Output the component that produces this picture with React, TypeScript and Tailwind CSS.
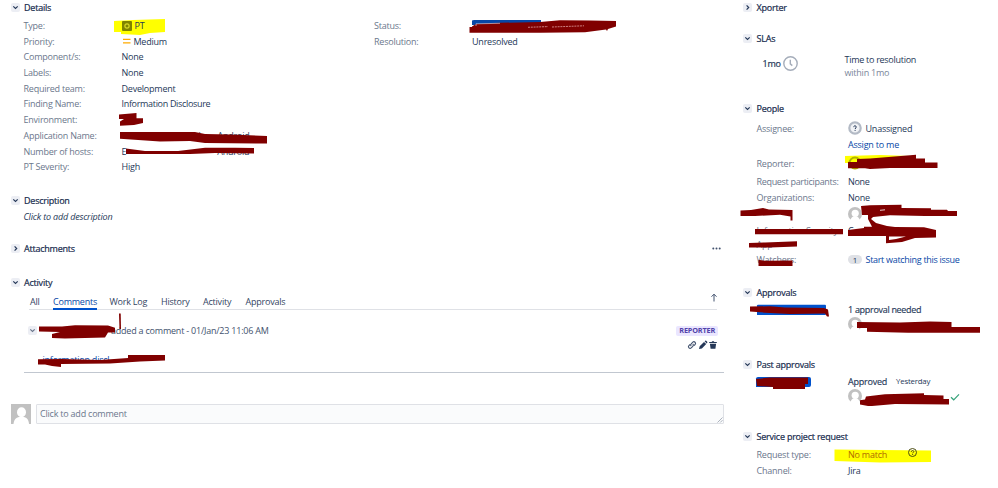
import type { ReactNode } from 'react';

/* Small square disclosure button with a chevron. */
function Toggle({ open = true, muted = false }: { open?: boolean; muted?: boolean }) {
  return (
    <span className="flex size-[9px] shrink-0 items-center justify-center rounded-[2px] bg-[#eceef4]">
      <svg viewBox="0 0 9 9" className="size-[9px]" fill="none" stroke={muted ? '#6b778c' : '#253858'} strokeWidth="1.2">
        <path d={open ? 'M2.3 3.4 4.5 5.4 6.7 3.4' : 'M3.6 2.3 5.7 4.5 3.6 6.7'} />
      </svg>
    </span>
  );
}

function Heading({ children, open = true, className = '' }: { children: ReactNode; open?: boolean; className?: string }) {
  return (
    <h2 className={`flex h-4 items-center gap-[4.5px] text-[#172b4d] ${className}`}>
      <Toggle open={open} />
      <span className="[-webkit-text-stroke:0.2px_#172b4d]">{children}</span>
    </h2>
  );
}

function Field({ label, children, className = 'h-[15.7px]' }: { label: string; children?: ReactNode; className?: string }) {
  return (
    <div className={`flex items-center ${className}`}>
      <dt className="w-[98px] shrink-0 text-[#6b778c]">{label}</dt>
      <dd className="flex items-center">{children}</dd>
    </div>
  );
}

function SideField({ label, children, className = '' }: { label: string; children?: ReactNode; className?: string }) {
  return (
    <div className={`flex items-center pl-[13.5px] ${className}`}>
      <dt className="w-[91.5px] shrink-0 whitespace-nowrap text-[#6b778c]">{label}</dt>
      <dd className="flex items-center">{children}</dd>
    </div>
  );
}

function Avatar() {
  return (
    <svg viewBox="0 0 14 14" className="size-[14px]">
      <circle cx="7" cy="7" r="7" fill="#c1c1c1" />
      <circle cx="7.2" cy="6.3" r="3.6" fill="#fff" />
      <path d="M2.4 14c.2-3.2 1.8-4.8 4.7-4.8s4.5 1.6 4.7 4.8z" fill="#fff" />
    </svg>
  );
}

function Highlights() {
  return (
    <svg className="absolute left-0 top-0 h-[488px] w-[998px]" viewBox="0 0 998 488" fill="#ffff00">
      <path d="M114 21 133 20 165 19V32L150 33 140 35 121 34V32H114z" />
      <path d="M845 156 880 155 910 156V166H848V163H845z" />
      <path d="M834.5 449.5 880 450 931 450.5V462L880 462.5 834.5 461z" />
    </svg>
  );
}

function Redactions() {
  return (
    <svg className="pointer-events-none absolute left-0 top-0 h-[488px] w-[998px]" viewBox="0 0 998 488" fill="#800000">
      <path d="M472 20.5 474 20H541V25H472z" fill="#0747a6" />
      <path d="M757 305.5Q757 304.7 758 304.7H825Q826 304.7 826 306V314Q826 315 825 315H757z" fill="#0052cc" />
      <path d="M756 378.5Q756 377 758 377H809Q811 377 811 379V385Q811 387 809 387H756z" fill="#0052cc" />

      <path d="M469.5 27H472V26.5L476 24 500 22.8 540 22 560 20.2 590 20.5 616 21V26.5L608 29 607 31 606 29.5 585 32.3 540 32.7H469.5z" />
      <path d="M476 26V23.8L500 23.3" fill="none" stroke="#dbe5f5" strokeWidth="0.6" />
      <path d="M528 27.3 548 26.6M552 27 584 25.8" stroke="#e0a0a0" strokeWidth="0.8" strokeDasharray="2 .8" />

      <path d="M119 114.5 136.5 113V118.3H143V123L134 125 120 125.7V121.5L124 119H119z" />
      <path d="M120 132H195L205 134 230 134.5 267 136V143.5L205 143 190 141 160 141.5 120 138.7z" />
      <path d="M126 148.5 145 151H178L205 147.7 235 147.7 254 148V153.5L215 153 190 154 126 154z" />

      <path d="M39 326.5 62 326.5 75 325.3 108 325.5 115 327.8V332.5H108L105 337.5 65 338.5 52 338V334L60 332 39 331.5z" />
      <path d="M119 313.5H120.7L121 329H119.5z" />
      <path d="M38 359.2 62 359 100 360 128 358V355H165V360.5L140 361.5 110 363.5 61 364V367L52 366 45 364.5H38z" />

      <path d="M848 162H857V159L870 158.5 910 155.3 916 154.7V158.5H925V162.5H937.5V168H890L870 169 865 168.2H848z" />
      <path d="M740.5 210.5 751 210 763 208 769 209.5 792.5 210V220.5H790.5V216.5L780 214.7 755 216H740.5z" />
      <path d="M861 206 870 205.3 901.5 204.7V208L931 208.3V209.8L947 209.7 948 211H957V216H925L890 215.3 873 217 871 219 876 223 887 226 895 227 924 227.3 936 230V237.5L915 238 902 242 886 243.3 886 236 848 236V230L864 228V226.8H872L868 219V215H862z" />
      <path d="M889 236.6 906 236.6 896 239 889 240z" fill="#fff" />
      <path d="M880 210.3 885 209.8" stroke="#fff" strokeWidth="0.8" />
      <path d="M755 229H843V234.3H755z" />
      <path d="M749 243 765 242.4 797 241.3V246.5L770 247.5H749z" />
      <path d="M758.5 259.7 765 260.8 792.5 260.5V266H758.5z" />

      <path d="M750 306.5 770 306.3 785 307.5 824 308 828 309.5 829 316.5H827L825 313.5 790 314 765 312.7 750 311.5z" />
      <path d="M857 322 900 322.5 930 321.5 951.5 322V327H980V332.7H908L867 331.7V328H857z" />
      <path d="M756 379 770 377.5 808 377.5V384H805V389H773V387L757 386z" />
      <path d="M860 400.3 865 399.5 866 396.5 885 394.3 924 393.3V395L943.5 395.5V399H949V404.5L895 404 872 406H868L860 404.5z" />
    </svg>
  );
}

export default function App() {
  return (
    <div className="relative h-[488px] w-[998px] overflow-hidden bg-white font-['Open_Sans','Noto_Sans',sans-serif] text-[9px] leading-none tracking-[-0.22px] text-[#253858]">
      <Highlights />
      <div className="relative flex">
        <main className="-mt-[0.6px] w-[733px] shrink-0 pl-[10.5px]">
          <Heading>Details</Heading>
          <div className="mt-[2.3px] flex pl-[13px]">
            <dl className="w-[350.5px]">
              <Field label="Type:">
                <svg viewBox="0 0 10 10" className="mr-[3px] size-[10px]">
                  <rect width="10" height="10" rx="1" fill="#7f8400" />
                  <rect x="3" y="3" width="4" height="4" rx="1" fill="none" stroke="#f2f230" />
                </svg>
                PT
              </Field>
              <Field label="Priority:">
                <svg viewBox="0 0 10 10" className="mr-[2px] size-[10px]" stroke="#ffab00" strokeWidth="1.3">
                  <path d="M1 3.4h7.5M1 6.9h7.5" />
                </svg>
                Medium
              </Field>
              <Field label="Component/s:">None</Field>
              <Field label="Labels:">None</Field>
              <Field label="Required team:">Development</Field>
              <Field label="Finding Name:"><span className="tracking-[-0.32px]">Information Disclosure</span></Field>
              <Field label="Environment:" />
              <Field label="Application Name:">
                <span className="ml-[77px]">l</span>
                <span className="ml-[17px]">Android</span>
              </Field>
              <Field label="Number of hosts:">
                <span>E</span>
                <span className="ml-[91px]">Android</span>
              </Field>
              <Field label="PT Severity:">High</Field>
            </dl>
            <dl>
              <Field label="Status:" />
              <Field label="Resolution:">Unresolved</Field>
            </dl>
          </div>

          <Heading className="mt-[17.7px]">Description</Heading>
          <p className="flex h-4 items-center pl-[13px] italic tracking-[-0.17px]">Click to add description</p>

          <div className="mt-[16.5px] flex items-center justify-between pr-[12px]">
            <Heading open={false}>Attachments</Heading>
            <svg viewBox="0 0 9 3" className="h-[3px] w-[9px]" fill="#42526e">
              <circle cx="1.3" cy="1.5" r="1" />
              <circle cx="4.5" cy="1.5" r="1" />
              <circle cx="7.7" cy="1.5" r="1" />
            </svg>
          </div>

          <Heading className="mt-[17.5px]">Activity</Heading>
          <section className="ml-[13px] mr-[9px] h-[83px] border-b border-[#c1c7d0]">
            <nav className="ml-[5px] mr-[7px] flex h-[19.5px] items-stretch border-b border-[#dfe1e6] text-[#344563]">
              <span className="flex w-[24.5px] items-center pl-[1.5px] pt-[3px]">All</span>
              <span className="-mb-px mr-[13px] flex w-[43.5px] items-center border-b-2 border-[#0052cc] pt-[4px] text-[#0747a6]">Comments</span>
              <span className="flex w-[51.5px] items-center pt-[3px]">Work Log</span>
              <span className="flex w-[42px] items-center pt-[3px]">History</span>
              <span className="flex w-[42.5px] items-center pt-[3px]">Activity</span>
              <span className="flex items-center pt-[3px]">Approvals</span>
              <svg viewBox="0 0 8 9" className="-mr-[1px] ml-auto mt-[3px] h-[9px] w-[8px]" fill="none" stroke="#42526e">
                <path d="M4 8.5V1.2M1.5 3.7 4 1.2l2.5 2.5" />
              </svg>
            </nav>
            <div className="mt-[13px] flex h-4 items-center pl-[4px] pr-[6px]">
              <Toggle muted />
              <span className="ml-[74.5px] text-[#42526e]">added a comment - 01/Jan/23 11:06 AM</span>
              <span className="ml-auto flex h-[10px] items-center rounded-[2px] bg-[#eae6ff] px-[3px] text-[7.3px] font-bold tracking-[-0.2px] text-[#5243aa]">REPORTER</span>
            </div>
            <div className="flex h-[13px] items-center justify-end pr-[6px]">
              <svg viewBox="0 0 10 10" className="mr-px size-[10px]" fill="none" stroke="#42526e" strokeWidth="1.1">
                <path d="M4.2 6.2C3.4 5.4 3.5 4.5 4.2 3.8L5.8 2.2C7.3 .8 9.5 3 8.1 4.5L6.9 5.6M5.8 3.9c.8.8.7 1.7 0 2.4L4.2 7.9C2.7 9.3.5 7.1 1.9 5.6L3.1 4.5" />
              </svg>
              <svg viewBox="0 0 10 10" className="size-[10px]" fill="#253858">
                <path d="M1 9.1 1.7 6.2 6 1.9 8.2 4.1 3.9 8.4zM6.6 1.3 7.3.7Q7.8.4 8.2.8L9.2 1.8Q9.6 2.3 9.2 2.8L8.7 3.5z" />
              </svg>
              <svg viewBox="0 0 10 10" className="size-[10px]" fill="#253858">
                <path d="M1.2 2.1H3.7L4.1 1.2H5.9L6.3 2.1H8.8V3H1.2zM1.9 3.7H8.1L7.4 8.8H2.6z" />
              </svg>
            </div>
            <p className="flex h-4 items-center pl-[19px] text-[#0747a6]">information discl</p>
          </section>

          <div className="mt-[31px] flex h-[20px] items-start">
            <svg viewBox="0 0 20 20" className="size-[20px]">
              <rect width="20" height="20" fill="#c1c1c1" />
              <ellipse cx="10.5" cy="8.3" rx="4.5" ry="5" fill="#fff" />
              <path d="M2.5 20c.5-4.8 3-7.2 8-7.2s7 2.4 7.5 7.2z" fill="#fff" />
            </svg>
            <div className="relative ml-[5.5px] flex h-[20px] w-[688px] items-center rounded-[1px] border border-[#dfe1e6] bg-[#fafbfc] pb-px pl-[3px] text-[#6b778c]">
              Click to add comment
              <svg viewBox="0 0 6 6" className="absolute bottom-0 right-0 size-[6px]" stroke="#8993a4" strokeWidth="0.7">
                <path d="M.5 5.5l5-5M3.2 5.5l2.3-2.3" />
              </svg>
            </div>
          </div>
        </main>

        <aside className="-mt-[0.6px] flex-1 pl-[10px]">
          <Heading open={false}>Xporter</Heading>
          <Heading className="mt-[15.5px]">SLAs</Heading>
          <div className="mt-[3.5px] flex h-[26px] items-center pl-[19.5px]">
            <span className="w-[20px] [-webkit-text-stroke:0.2px_#253858]">1mo</span>
            <svg viewBox="0 0 15 15" className="size-[15px]" fill="none" stroke="#a5adba" strokeWidth="1.4">
              <circle cx="7.5" cy="7.5" r="6.7" />
              <path d="M7.3 3.7v4.2l2 1.7" />
            </svg>
            <div className="ml-[47px] mt-[5px] flex flex-col gap-[3.5px]">
              <span className="tracking-[-0.28px]">Time to resolution</span>
              <span className="text-[#7a869a]">within 1mo</span>
            </div>
          </div>

          <Heading className="mt-[24.5px]">People</Heading>
          <dl>
            <SideField label="Assignee:" className="mt-[3px] h-[17px]">
              <svg viewBox="0 0 14 14" className="mr-[3.5px] size-[14px]">
                <circle cx="7" cy="7" r="5.7" fill="#f1f3f6" stroke="#b3bac5" strokeWidth="2.2" />
                <path d="M5.7 6.1c0-1.8 2.6-1.6 2.6-.1 0 1-1.2.9-1.2 2M7.1 8.9v1" fill="none" stroke="#253858" />
              </svg>
              Unassigned
            </SideField>
            <SideField label="" className="h-[16px]">
              <span className="text-[#0747a6]">Assign to me</span>
            </SideField>
            <SideField label="Reporter:" className="mt-[2px] h-[17px]">
              <svg viewBox="0 0 14 14" className="size-[14px]" fill="none" stroke="#b2b200" strokeWidth="2">
                <circle cx="7" cy="7" r="5.5" />
              </svg>
            </SideField>
            <SideField label="Request participants:" className="mt-[2px] h-[16px] tracking-[-0.32px]">None</SideField>
            <SideField label="Organizations:" className="h-[16px]">None</SideField>
            <SideField label="" className="h-[16px]"><Avatar /></SideField>
            <SideField label="Information Security" className="mt-[1px] h-[16px]">C</SideField>
            <SideField label="App" className="h-[12px]" />
            <SideField label="Watchers:" className="mt-[1px] h-[16px]">
              <span className="mr-[3.5px] flex h-[9px] w-[14px] items-center justify-center rounded-full bg-[#dfe1e6] text-[8px]">1</span>
              <span className="tracking-[-0.3px] text-[#0747a6]">Start watching this issue</span>
            </SideField>
          </dl>

          <Heading className="mt-[16.5px]">Approvals</Heading>
          <div className="pl-[105px]">
            <p className="mt-[1px] flex h-4 items-center tracking-[-0.3px] [-webkit-text-stroke:0.15px_#253858]">1 approval needed</p>
            <Avatar />
          </div>

          <Heading className="mt-[25px]">Past approvals</Heading>
          <div className="pl-[105px]">
            <p className="mt-[1px] flex h-4 items-center">
              <span className="[-webkit-text-stroke:0.15px_#253858]">Approved</span>
              <span className="ml-[9px] mt-px text-[7.8px] tracking-[-0.2px]">Yesterday</span>
            </p>
            <div className="flex items-center gap-[88px]">
              <Avatar />
              <svg viewBox="0 0 10 8" className="mt-[2px] h-[8px] w-[10px]" fill="none" stroke="#36a37a" strokeWidth="1.2">
                <path d="M1 4.2 3.7 6.8 9 1.3" />
              </svg>
            </div>
          </div>

          <Heading className="mt-[25.3px]">Service project request</Heading>
          <dl>
            <SideField label="Request type:" className="mt-[1.7px] h-[16px]">
              <span className="w-[59.5px] text-[#b06a00]">No match</span>
              <svg viewBox="0 0 9 9" className="-mt-[3px] size-[9px]" fill="none" stroke="#4b4d12" strokeWidth="1">
                <circle cx="4.5" cy="4.5" r="4" />
                <path d="M3.3 3.8c0-1.8 2.5-1.6 2.5-.2 0 .9-1.2.8-1.2 1.7M4.6 6v.9" />
              </svg>
            </SideField>
            <SideField label="Channel:" className="h-[16px]">Jira</SideField>
          </dl>
        </aside>
      </div>
      <Redactions />
    </div>
  );
}
